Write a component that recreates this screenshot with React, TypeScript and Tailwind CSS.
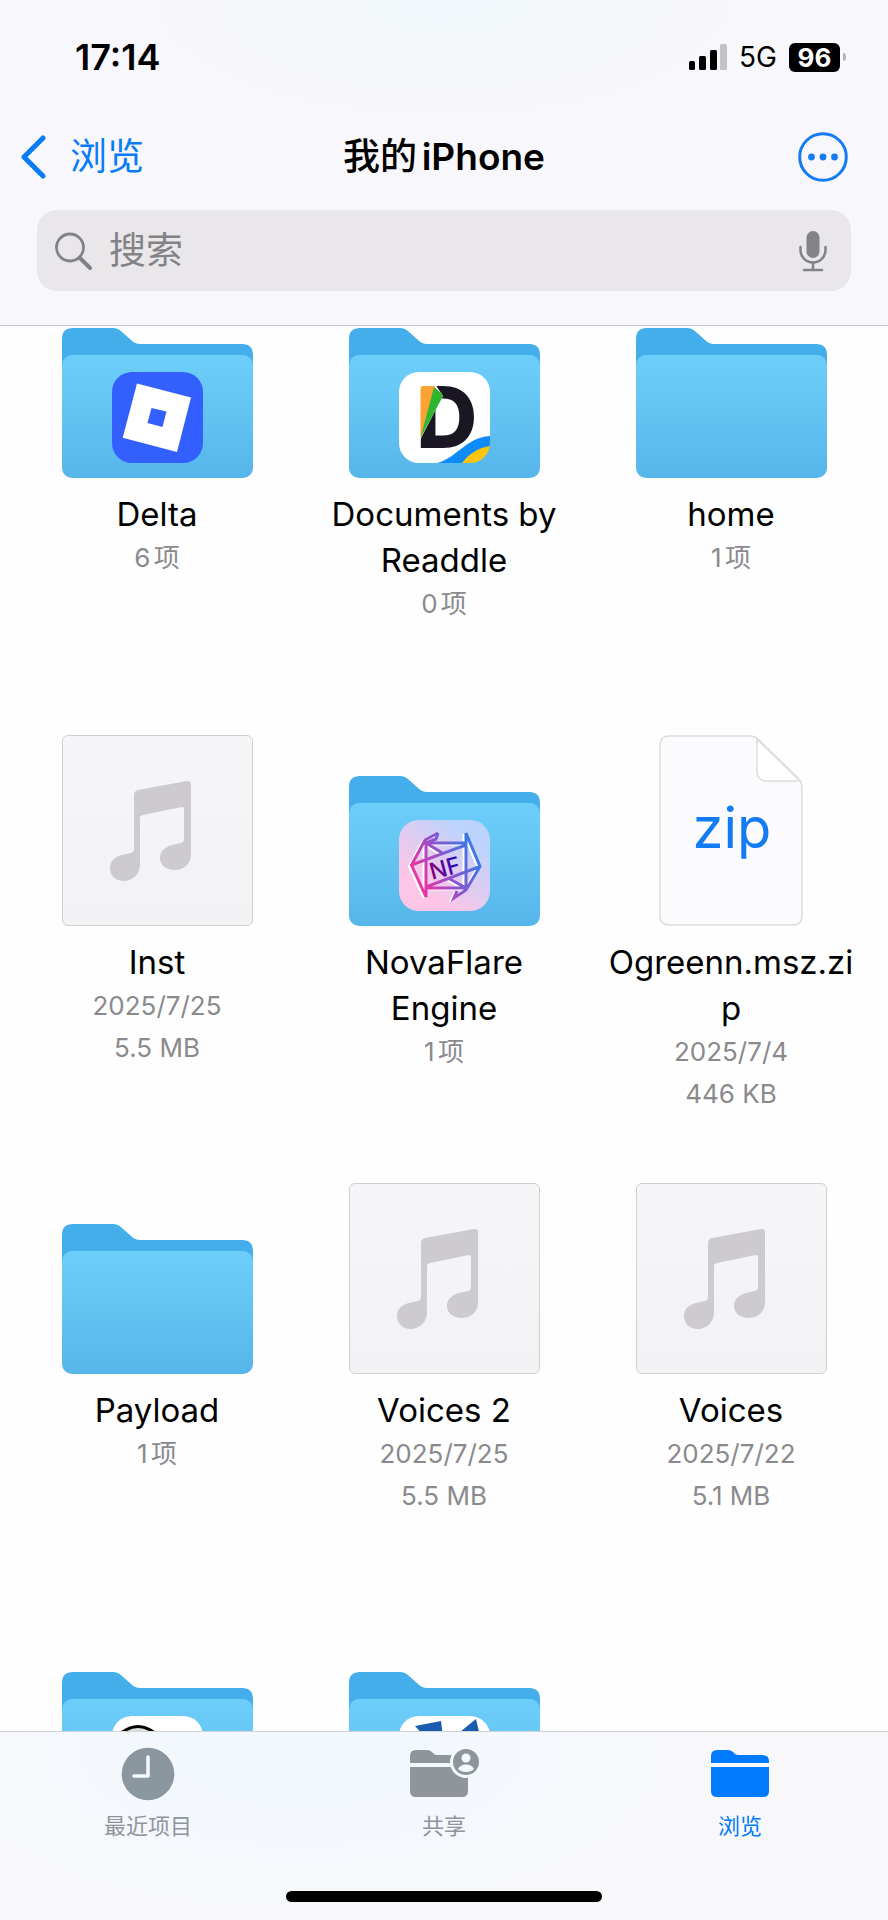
import { type ReactNode } from 'react';

type Kind = 'folder' | 'audio' | 'zip';

interface FileItem {
  id: string;
  kind: Kind;
  name?: string;
  meta?: string[];
  badge?: ReactNode;
}

function DeltaBadge() {
  return (
    <>
      <rect width="91" height="91" rx="20" fill="#335fff" />
      <path
        fillRule="evenodd"
        fill="#fff"
        d="M25 11.5 79 25.5 65 80 10.7 65.7ZM39.5 36 35.5 51 50.5 55 54.5 39.5Z"
      />
    </>
  );
}

function DocumentsBadge() {
  return (
    <>
      <clipPath id="documents-clip">
        <rect width="91" height="91" rx="20" />
      </clipPath>
      <g clipPath="url(#documents-clip)">
        <rect width="91" height="91" fill="#fff" />
        <text x="17" y="76" fontSize="85" fontWeight="800" fill="#1b1722" className="font-[Inter]">
          D
        </text>
        <path d="M19 12H36L44 24 35 41 21 68H19Z" fill="#fff" />
        <path d="M24 14H36L33 38 21.500 66V17Q21.500 14 24 14Z" fill="#fda333" />
        <path d="M35 15 42 21Q45 23 43 26L21.500 66Z" fill="#2fb52e" />
        <path d="M38 91C58 86 66 66 91 64V91Z" fill="#0d8bfb" />
        <path d="M63 91C70 82 78 76 91 74V91Z" fill="#ffc40c" />
      </g>
    </>
  );
}

function NovaBadge() {
  const frame =
    'M39 13 26 20 12.500 45 27 77V23H67V68H27M12.500 45 67 25M27 67 81 46.500M67 13V23M67 13 81 46.500 67 70 55 78 58 71M27 23 45 34M49 58 67 68M27 23 37 19 39 13';
  return (
    <>
      <linearGradient id="nova-bg" x1="0.2" y1="0.7" x2="0.7" y2="0.1">
        <stop offset="0" stopColor="#fdc5e6" />
        <stop offset="1" stopColor="#bcd4fd" />
      </linearGradient>
      <linearGradient id="nova-line" gradientUnits="userSpaceOnUse" x1="24" y1="60" x2="72" y2="35">
        <stop offset="0" stopColor="#e436a6" />
        <stop offset="0.5" stopColor="#8e54cd" />
        <stop offset="1" stopColor="#4176e6" />
      </linearGradient>
      <linearGradient id="nova-text">
        <stop offset="0" stopColor="#8b0077" />
        <stop offset="1" stopColor="#1a08c8" />
      </linearGradient>
      <rect width="91" height="91" rx="20" fill="url(#nova-bg)" />
      <path d={frame} transform="translate(-2 1)" fill="none" stroke="#fff" strokeWidth="3" />
      <path d={frame} fill="none" stroke="url(#nova-line)" strokeWidth="3" />
      <text
        x="33"
        y="60"
        fontSize="23"
        fontWeight="500"
        fill="url(#nova-text)"
        transform="rotate(-15 33 60)"
        className="font-[Inter]"
      >
        NF
      </text>
    </>
  );
}

function SketchBadge() {
  return (
    <>
      <rect width="91" height="91" rx="20" fill="#fff" />
      <path d="M9 17Q26 4 43 17" fill="#ddd" stroke="#000" strokeWidth="3" />
    </>
  );
}

function WingsBadge() {
  return (
    <>
      <rect width="91" height="91" rx="20" fill="#fff" />
      <path d="M16 10 42 5 44 20H25ZM56 20 77 3 81 20Z" fill="#1c5cb0" />
    </>
  );
}

function FolderIcon({ id, badge }: { id: string; badge?: ReactNode }) {
  return (
    <svg viewBox="0 0 191 150" className="w-[191px] h-[150px]" aria-hidden="true">
      <linearGradient id={`folder-${id}`} x1="0" y1="0" x2="0" y2="1">
        <stop offset="0" stopColor="#6ecefa" />
        <stop offset="1" stopColor="#56b6ea" />
      </linearGradient>
      <path
        d="M0 11Q0 0 11 0H51Q56 0 60 4L69 12Q73 16 78 16H180Q191 16 191 27V60H0Z"
        fill="#43aee9"
      />
      <rect y="27" width="191" height="123" rx="10" fill={`url(#folder-${id})`} />
      <g transform="translate(50 44)">{badge}</g>
    </svg>
  );
}

function AudioIcon() {
  return (
    <div className="size-[191px] rounded-md border border-[#d0cfd2] bg-linear-to-b from-[#f6f5f8] to-[#f2f1f4]">
      <svg viewBox="1 1 189 189" className="w-full h-full" aria-hidden="true">
        <path
          d="M72 60Q72 56 76 55L125 46Q129 45.500 129 49V120C129 129 121 135 113 135C104 135 98 130 98 123C98 116 103 112 110 110L119 108Q122 107 122 104V74Q122 71.500 120 72L81 80Q78 80.500 78 83V130C78 139 70 146 62 146C53 146 48 140 48 133C48 126 53 121.500 60 120L69 118Q72 117 72 114Z"
          fill="#cdcbce"
        />
      </svg>
    </div>
  );
}

function ZipIcon() {
  return (
    <svg viewBox="0 0 144 191" className="w-[144px] h-[191px]" aria-hidden="true">
      <path
        d="M10 1H91Q96 1 100 5L139 43Q143 47 143 53V181Q143 190 134 190H10Q1 190 1 181V10Q1 1 10 1Z"
        fill="#fbfafd"
        stroke="#dddce0"
        strokeWidth="1.500"
      />
      <path d="M98 4V36Q98 46 108 46H141Z" fill="#fff" stroke="#dddce0" strokeWidth="1.500" />
      <text x="73" y="113" textAnchor="middle" fontSize="56" fill="#137cf5" className="font-[Inter]">
        zip
      </text>
    </svg>
  );
}

const ITEMS: FileItem[] = [
  { id: 'delta', kind: 'folder', name: 'Delta', meta: ['6项'], badge: <DeltaBadge /> },
  { id: 'documents', kind: 'folder', name: 'Documents by Readdle', meta: ['0项'], badge: <DocumentsBadge /> },
  { id: 'home', kind: 'folder', name: 'home', meta: ['1项'] },
  { id: 'inst', kind: 'audio', name: 'Inst', meta: ['2025/7/25', '5.5 MB'] },
  { id: 'nova', kind: 'folder', name: 'NovaFlare Engine', meta: ['1项'], badge: <NovaBadge /> },
  { id: 'ogreenn', kind: 'zip', name: 'Ogreenn.msz.zip', meta: ['2025/7/4', '446 KB'] },
  { id: 'payload', kind: 'folder', name: 'Payload', meta: ['1项'] },
  { id: 'voices2', kind: 'audio', name: 'Voices 2', meta: ['2025/7/25', '5.5 MB'] },
  { id: 'voices', kind: 'audio', name: 'Voices', meta: ['2025/7/22', '5.1 MB'] },
  { id: 'row4a', kind: 'folder', badge: <SketchBadge /> },
  { id: 'row4b', kind: 'folder', badge: <WingsBadge /> },
];

function FileCell({ item }: { item: FileItem }) {
  return (
    <li>
      <button type="button" className="w-full flex flex-col items-center">
        <span className="h-[191px] mb-[13px] flex items-end">
          {item.kind === 'folder' && <FolderIcon id={item.id} badge={item.badge} />}
          {item.kind === 'audio' && <AudioIcon />}
          {item.kind === 'zip' && <ZipIcon />}
        </span>
        {item.name && (
          <span className="w-full text-[33px] leading-[46px] text-black wrap-anywhere">{item.name}</span>
        )}
        {item.meta?.map((line) => (
          <span key={line} className="text-[26px] leading-[42px] text-[#8a8a8e]">
            {line}
          </span>
        ))}
      </button>
    </li>
  );
}

function StatusBar() {
  return (
    <div className="h-[114px] pl-[75px] pr-[42px] flex items-center justify-between">
      <span className="text-[36px] font-semibold">17:14</span>
      <div className="flex items-center">
        <svg viewBox="0 0 38 26" className="w-[38px] h-[26px]" aria-hidden="true">
          <rect y="17" width="6" height="9" rx="1.500" />
          <rect x="10" y="12" width="7" height="14" rx="1.500" />
          <rect x="21" y="6" width="7" height="20" rx="1.500" />
          <rect x="31" width="7" height="26" rx="1.500" fill="#c3c2c5" />
        </svg>
        <span className="ml-3 mr-3 text-[28px]">5G</span>
        <span className="w-[51px] h-[29px] rounded-md bg-black text-white text-[26px] leading-[29px] font-bold text-center">
          96
        </span>
        <span className="ml-[3px] w-[3px] h-2 rounded-r-full bg-[#b5b4b8]" />
      </div>
    </div>
  );
}

function FolderGlyph() {
  return (
    <>
      <path d="M0 15V8Q0 2 6 2H17Q20 2 22 4L24 6Q25 7 28 7H51Q58 7 58 13V15Z" />
      <path d="M0 19H58V43Q58 49 52 49H6Q0 49 0 43Z" />
    </>
  );
}

export default function App() {
  return (
    <div className="h-screen flex flex-col bg-[#fefefe] text-black font-[Inter,'Noto_Sans_CJK_SC',sans-serif] [text-autospace:normal]">
      <header className="shrink-0 pb-[34px] border-b border-[#c9c8cc] bg-[#f8f7fb] bg-[radial-gradient(ellipse_300px_120px_at_50%_0%,#f1f8fb,#f8f7fb)]">
        <StatusBar />

        <div className="h-[86px] px-5 grid grid-cols-[1fr_auto_1fr] items-center">
          <button type="button" className="flex items-center gap-6 text-[37px] text-[#087cf8]">
            <svg viewBox="0 0 26 44" className="w-[26px] h-[44px]" aria-hidden="true">
              <path
                d="M23 3 4 22 23 41"
                fill="none"
                stroke="currentColor"
                strokeWidth="5"
                strokeLinecap="round"
                strokeLinejoin="round"
              />
            </svg>
            浏览
          </button>
          <h1 className="text-[37px] font-semibold">
            <span className="font-medium">我的</span>iPhone
          </h1>
          <button type="button" aria-label="更多" className="mr-5 justify-self-end text-[#137cf0]">
            <svg viewBox="0 0 50 50" className="size-[50px]" fill="currentColor" aria-hidden="true">
              <circle cx="25" cy="25" r="23.3" fill="none" stroke="currentColor" strokeWidth="3" />
              <circle cx="13.500" cy="25" r="3.400" />
              <circle cx="25" cy="25" r="3.400" />
              <circle cx="36.500" cy="25" r="3.400" />
            </svg>
          </button>
        </div>

        <div className="mt-[10px] mx-[37px] h-[81px] pl-[18px] pr-6 rounded-[20px] bg-[#e9e7ea] flex items-center text-[#838287]">
          <svg viewBox="0 0 38 38" className="size-[38px] shrink-0" aria-hidden="true">
            <g fill="none" stroke="currentColor" strokeLinecap="round">
              <circle cx="15" cy="15.500" r="13.500" strokeWidth="2.800" />
              <path d="M25 26 35 36" strokeWidth="4" />
            </g>
          </svg>
          <input
            type="search"
            aria-label="搜索"
            placeholder="搜索"
            className="ml-4 min-w-0 flex-1 bg-transparent text-[37px] outline-none placeholder:text-[#838287]"
          />
          <button type="button" aria-label="听写">
            <svg viewBox="0 0 28 42" className="w-[28px] h-[42px]" aria-hidden="true">
              <rect x="7.500" y="1" width="13" height="27" rx="6.500" fill="currentColor" />
              <path
                d="M1.500 17V20A12.500 12.500 0 0 0 26.500 20V17M14 33V40M5 40H23"
                fill="none"
                stroke="currentColor"
                strokeWidth="2.500"
                strokeLinecap="round"
              />
            </svg>
          </button>
        </div>
      </header>

      {/* List is scrolled a little, so the first row starts under the header */}
      <main className="flex-1 min-h-0 overflow-hidden">
        <ul className="-mt-[39px] px-[33px] grid grid-cols-3 auto-rows-[448px] gap-x-[39px]">
          {ITEMS.map((item) => (
            <FileCell key={item.id} item={item} />
          ))}
        </ul>
      </main>

      <footer className="shrink-0 pb-[18px] border-t border-[#d2d3d7] bg-[#f8f8fb] bg-[radial-gradient(ellipse_420px_180px_at_34%_10%,#f1f8fe,#f8f8fb)]">
        <nav className="pt-[15px] grid grid-cols-3 text-[22px] leading-[30px] text-[#8f959b]">
          <a href="#recents" className="flex flex-col items-center gap-[10px]">
            <svg viewBox="0 0 54 54" className="size-[54px]" aria-hidden="true">
              <circle cx="27" cy="27" r="26.300" fill="#8b979e" />
              <path
                d="M27 10V29H13"
                fill="none"
                stroke="#f4f9fd"
                strokeWidth="3.500"
                strokeLinecap="round"
                strokeLinejoin="round"
              />
            </svg>
            最近项目
          </a>
          <a href="#shared" className="flex flex-col items-center gap-[10px]">
            <svg viewBox="0 0 70 54" className="w-[70px] h-[54px]" fill="currentColor" aria-hidden="true">
              <g transform="translate(1 1)">
                <FolderGlyph />
              </g>
              <circle cx="57" cy="15" r="16" fill="#f4f9fd" />
              <circle cx="57" cy="15" r="13" />
              <circle cx="57" cy="11" r="4.500" fill="#f4f9fd" />
              <path d="M49 22Q51 17.500 57 17.500T65 22Q62 25 57 25T49 22Z" fill="#f4f9fd" />
            </svg>
            共享
          </a>
          <a href="#browse" aria-current="page" className="flex flex-col items-center gap-[10px] text-[#007aff]">
            <svg viewBox="0 0 58 54" className="w-[58px] h-[54px]" fill="currentColor" aria-hidden="true">
              <g transform="translate(0 1)">
                <FolderGlyph />
              </g>
            </svg>
            浏览
          </a>
        </nav>
        <div className="mt-[50px] mx-auto w-[316px] h-[11px] rounded-full bg-black" />
      </footer>
    </div>
  );
}
